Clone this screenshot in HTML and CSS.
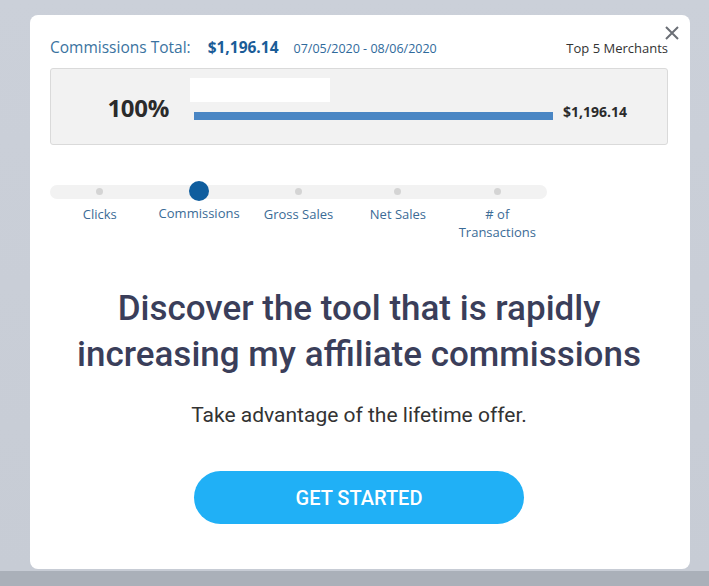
FILE: index.html
```html
<!DOCTYPE html>
<html lang="en">
<head>
<meta charset="UTF-8">
<title>Commissions</title>
<link rel="stylesheet" href="styles.css">
</head>
<body>
<div class="modal">
    <button class="close" type="button" aria-label="Close">
        <svg width="16" height="16" viewBox="0 0 16 16"><path d="M2 2L14 14M14 2L2 14" stroke="#6b6f76" stroke-width="2" fill="none"/></svg>
    </button>
    <div class="summary">
        <span class="summary-label">Commissions Total:</span>
        <span class="summary-total">$1,196.14</span>
        <span class="summary-dates">07/05/2020 - 08/06/2020</span>
        <span class="summary-top">Top 5 Merchants</span>
    </div>
    <div class="chart">
        <div class="chart-pct">100%</div>
        <div class="chart-bar-wrap">
            <div class="chart-name"></div>
            <div class="chart-bar"></div>
        </div>
        <div class="chart-amount">$1,196.14</div>
    </div>
    <div class="steps">
        <div class="track"></div>
        <div class="step">
            <span class="dot"></span>
            <span class="step-label">Clicks</span>
        </div>
        <div class="step active">
            <span class="dot"></span>
            <span class="step-label">Commissions</span>
        </div>
        <div class="step">
            <span class="dot"></span>
            <span class="step-label">Gross Sales</span>
        </div>
        <div class="step">
            <span class="dot"></span>
            <span class="step-label">Net Sales</span>
        </div>
        <div class="step">
            <span class="dot"></span>
            <span class="step-label"># of<br>Transactions</span>
        </div>
    </div>
    <h1 class="headline">Discover the tool that is rapidly<br>increasing my affiliate commissions</h1>
    <p class="subline">Take advantage of the lifetime offer.</p>
    <button class="cta" type="button">GET STARTED</button>
</div>
</body>
</html>
```
FILE: styles.css
```css
body {
    margin: 0;
    height: 586px;
    overflow: hidden;
    padding: 15px 0 0 30px;
    box-sizing: border-box;
    background: linear-gradient(#cbd0d9 0, #c7ccd5 571px, #aab0b9 571px);
    font-family: "Open Sans", "Liberation Sans", sans-serif;
}
.modal {
    position: relative;
    width: 660px;
    height: 554px;
    background: #fff;
    border-radius: 8px;
    padding: 21px 22px 0 20px;
    box-sizing: border-box;
}
.close {
    position: absolute;
    top: 10px;
    right: 10px;
    background: none;
    border: none;
    padding: 0;
    cursor: pointer;
}
.summary {
    display: flex;
    align-items: baseline;
    height: 22px;
}
.summary-label {
    font-size: 15.5px;
    color: #3a73a0;
}
.summary-total {
    font-size: 15.5px;
    font-weight: 700;
    color: #1a5c97;
    margin-left: 17px;
}
.summary-dates {
    font-size: 12.5px;
    color: #2f6a9b;
    margin-left: 15px;
}
.summary-top {
    font-size: 13px;
    color: #333;
    margin-left: auto;
}
.chart {
    margin-top: 10px;
    height: 77px;
    box-sizing: border-box;
    background: #f2f2f2;
    border: 1px solid #dadada;
    border-radius: 3px;
    display: flex;
    align-items: center;
}
.chart-pct {
    width: 118px;
    text-align: right;
    font-size: 24px;
    font-weight: 700;
    letter-spacing: -0.3px;
    color: #2b2b2b;
    padding-top: 2px;
}
.chart-bar-wrap {
    margin-left: 25px;
    align-self: flex-start;
    padding-top: 9px;
}
.chart-name {
    width: 140px;
    height: 24px;
    background: #fff;
    margin-left: -4px;
}
.chart-bar {
    width: 359px;
    height: 8px;
    margin-top: 10px;
    background: #4a86c4;
}
.chart-amount {
    margin-left: 10px;
    padding-top: 10px;
    font-size: 14px;
    font-weight: 700;
    color: #2b2b2b;
}
.steps {
    position: relative;
    display: flex;
    width: 497px;
    margin-top: 38px;
    height: 64px;
}
.track {
    position: absolute;
    left: 0;
    right: 0;
    top: 2px;
    height: 14px;
    border-radius: 7px;
    background: #f2f2f2;
}
.step {
    position: relative;
    flex: 1;
    display: flex;
    flex-direction: column;
    align-items: center;
}
.dot {
    width: 7px;
    height: 7px;
    margin-top: 5px;
    margin-bottom: 10px;
    border-radius: 50%;
    background: #d4d4d4;
}
.step.active .dot {
    width: 20px;
    height: 20px;
    margin-top: -2px;
    margin-bottom: 3px;
    background: #0f5d9e;
}
.step-label {
    font-size: 13px;
    line-height: 18px;
    color: #3b6b96;
    text-align: center;
    white-space: nowrap;
}
.headline {
    margin: 39px 0 0;
    font-family: Roboto, "Liberation Sans", sans-serif;
    font-weight: 500;
    font-size: 35px;
    line-height: 46px;
    color: #3a3e5a;
    text-align: center;
}
.subline {
    margin: 25px 0 0;
    font-family: Roboto, "Liberation Sans", sans-serif;
    font-size: 21px;
    color: #333;
    text-align: center;
}
.cta {
    display: block;
    margin: 44px auto 0;
    width: 330px;
    height: 53px;
    border: none;
    border-radius: 27px;
    background: #20b0f6;
    color: #fff;
    font-family: Roboto, "Liberation Sans", sans-serif;
    font-weight: 500;
    font-size: 20px;
    cursor: pointer;
}
```
